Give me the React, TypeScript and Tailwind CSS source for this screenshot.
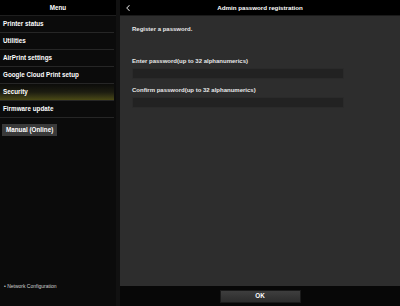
import { ChevronLeft } from 'lucide-react';

const menuItems = [
  'Printer status',
  'Utilities',
  'AirPrint settings',
  'Google Cloud Print setup',
  'Security',
  'Firmware update',
];

const MenuRow = ({ label, active }: { label: string; active?: boolean }) => (
  <div
    className={
      'h-[17px] flex items-center px-[3px] mr-[2px] border-b border-[#262626] text-[6.3px] font-bold text-white ' +
      (active ? 'bg-gradient-to-b from-[#0c0c0a] via-[#1c1c10] to-[#4b4a14]' : '')
    }
  >
    {label}
  </div>
);

const PasswordField = ({ label }: { label: string }) => (
  <div className="flex flex-col gap-[3px]">
    <span className="text-[6px] leading-[8px] font-bold text-[#e8e8e8]">{label}</span>
    <div className="h-[11px] w-[212px] bg-[#222222] border border-[#2a2a2a]" />
  </div>
);

export default function App() {
  return (
    <div
      className="w-[400px] h-[306px] flex bg-black overflow-hidden"
      style={{ fontFamily: '"Liberation Sans", Arial, sans-serif' }}
    >
      {/* sidebar */}
      <aside className="w-[120px] flex flex-col bg-[#0b0b0b] border-r-[4px] border-[#111111]">
        <div className="h-[16px] flex items-center justify-center bg-black text-[6.3px] font-bold text-white border-b border-[#1e1e1e]">
          Menu
        </div>
        {menuItems.map(item => (
          <MenuRow key={item} label={item} active={item === 'Security'} />
        ))}
        <div className="flex px-[2px] pt-[6px]">
          <div className="h-[12px] flex items-center px-[4px] bg-[#3a3a3a] text-[6.3px] font-bold text-white">
            Manual (Online)
          </div>
        </div>
        <div className="flex-1" />
        <div className="px-[4px] pb-[17px] leading-[6px] text-[5px] text-[#cfcfcf]">
          • Network Configuration
        </div>
      </aside>

      {/* main */}
      <main className="flex-1 flex flex-col min-w-0">
        <div className="h-[16px] relative flex items-center justify-center bg-black border-b border-[#1a1a1a]">
          <ChevronLeft className="absolute left-[3px] w-[10px] h-[10px] text-[#d0d0d0]" strokeWidth={2.5} />
          <span className="text-[6.2px] font-bold text-white">Admin password registration</span>
        </div>
        <div className="flex-1 bg-[#2d2d2d] px-[12px] pt-[9px]">
          <p className="text-[6px] leading-[8px] font-bold text-[#e8e8e8]">Register a password.</p>
          <div className="mt-[24px] flex flex-col gap-[7px]">
            <PasswordField label="Enter password(up to 32 alphanumerics)" />
            <PasswordField label="Confirm password(up to 32 alphanumerics)" />
          </div>
        </div>
        <div className="h-[20px] flex items-center justify-center bg-[#070707]">
          <button className="w-[81px] h-[13px] flex items-center justify-center bg-gradient-to-b from-[#3e3e3e] to-[#2c2c2c] border border-[#1a1a1a] text-[6.3px] font-bold text-white">
            OK
          </button>
        </div>
      </main>
    </div>
  );
}
